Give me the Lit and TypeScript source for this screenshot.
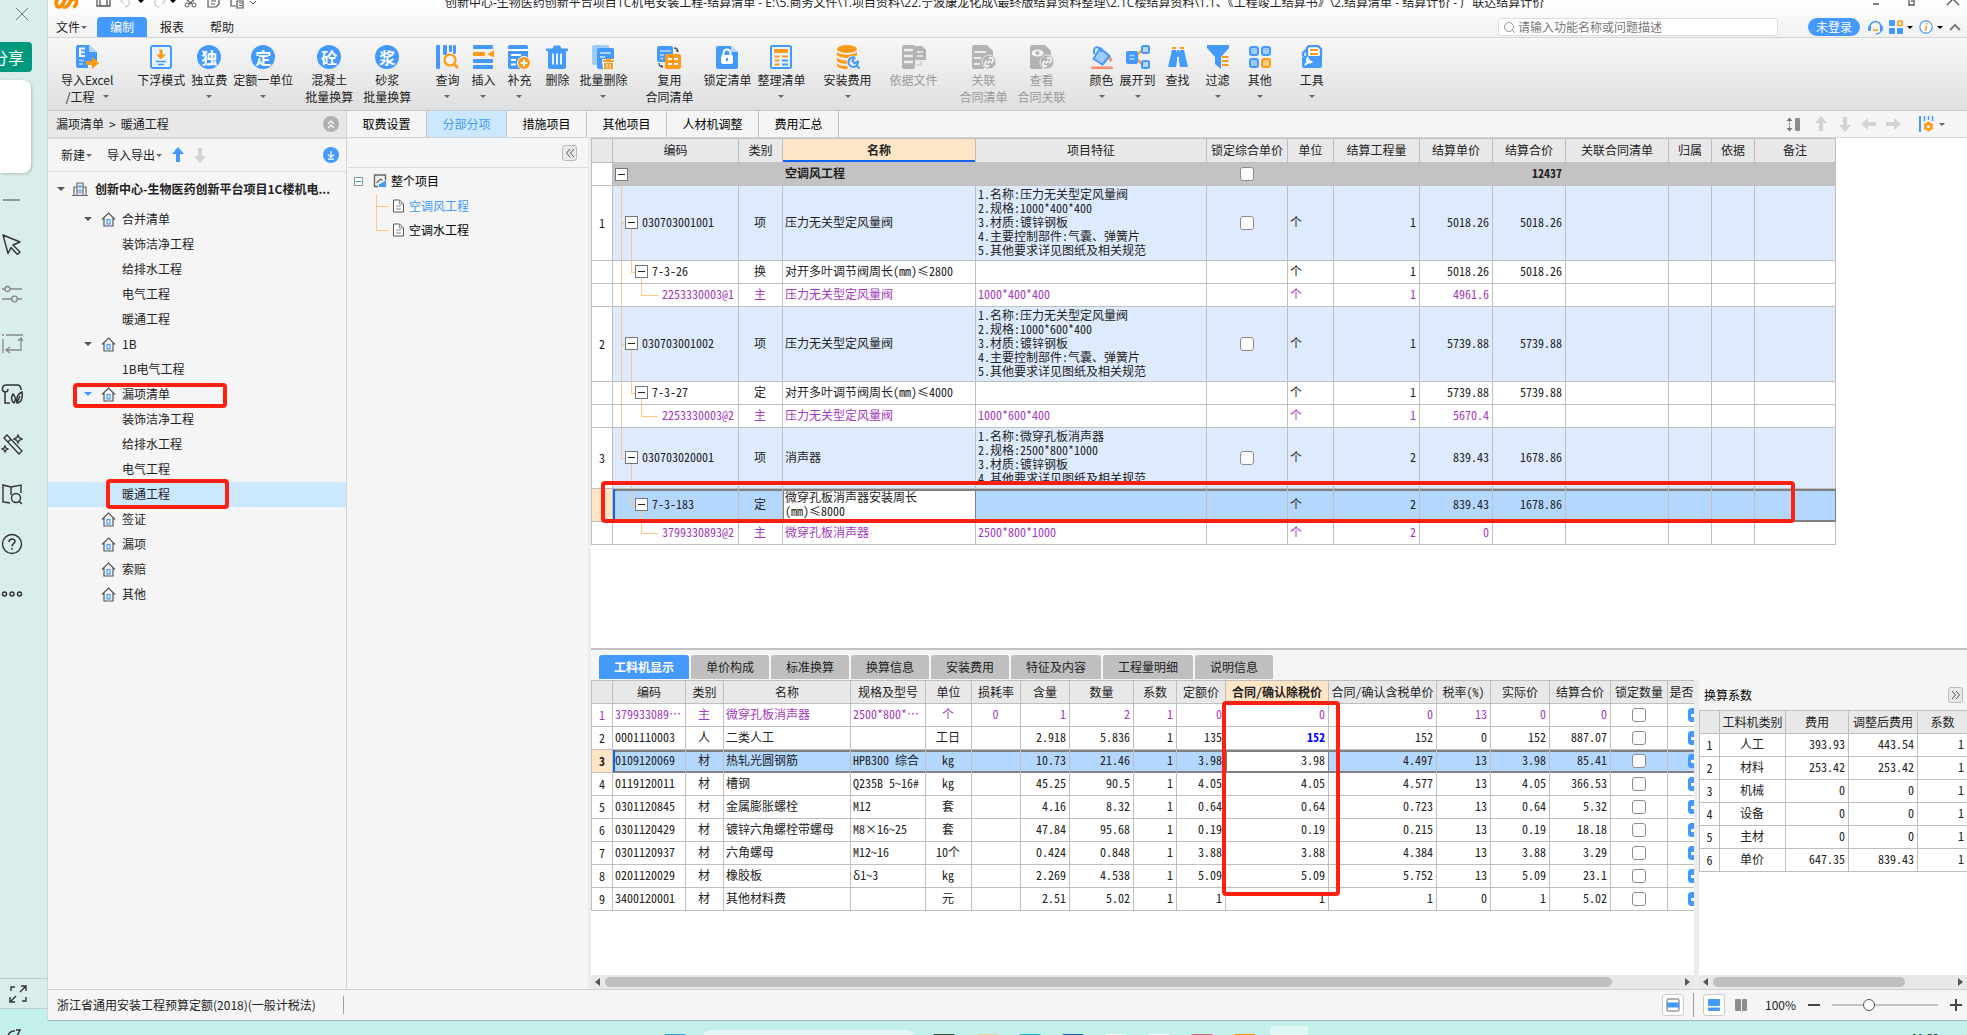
import { LitElement, html, svg, css, nothing, type TemplateResult } from "lit";
import { customElement } from "lit/decorators.js";
import { classMap } from "lit/directives/class-map.js";

const B = "#4499ff";
const O = "#ff9a17";
const G = "#b3b3b3";

const icon = (body: unknown, size = 24, cls = "ic", box = size) =>
  html`<svg class=${cls} width=${size} height=${size} viewBox="0 0 ${box} ${box}" fill="none" aria-hidden="true">${body}</svg>`;

const ICONS: Record<string, TemplateResult> = {
  excel: icon(svg`<path d="M3 0h11l8 7v10h-9v6H3a2 2 0 0 1-2-2V2a2 2 0 0 1 2-2z" fill=${B}/><path d="M14 0l8 7h-8z" fill="#b5d7ff"/>
    <path d="M10 3.500H5v7.500h5M5 7.200h4.500" stroke="#fff" stroke-width="2"/><path d="M4 15.500h5M4 19h4" stroke="#b5d7ff" stroke-width="1.500"/>
    <path d="M11 16h6v-4l7 6-7 6v-4h-6z" fill=${O}/>`),
  float: icon(svg`<rect x="2" y="1" width="20" height="22" rx="2" fill="#eaf4ff" stroke=${B} stroke-width="2"/>
    <path d="M10.500 4.500h3v5H17l-5 5-5-5h3.500z" fill=${O}/><path d="M7 16.500h10M9 19.500h6" stroke=${B} stroke-width="1.600"/>`),
  query: icon(svg`<rect x="1" y="0" width="4" height="24" rx="1" fill=${B}/><rect x="8" y="0" width="4" height="10" rx="1" fill=${B}/><rect x="14" y="0" width="3" height="7" rx="1" fill=${B}/><rect x="18" y="0" width="3" height="9" rx="1" fill=${B}/>
    <circle cx="15" cy="15" r="5.500" fill="#f7f2ea" stroke=${O} stroke-width="2.200"/><path d="M19 19l4 4" stroke=${O} stroke-width="2.600"/>`),
  insert: icon(svg`<rect x="2" y="0" width="20" height="4" rx="1" fill=${B}/><rect x="2" y="14" width="20" height="4" rx="1" fill=${B}/><rect x="2" y="20" width="20" height="4" rx="1" fill=${B}/>
    <rect x="2" y="7" width="12" height="4" rx="1" fill=${O}/><path d="M23 5.500v7L16 9z" fill=${O}/>`),
  supply: icon(svg`<path d="M3 0h16a2 2 0 0 1 2 2v20a2 2 0 0 1-2 2H3a2 2 0 0 1-2-2V2a2 2 0 0 1 2-2z" fill=${B}/><path d="M1 5h20M4 10h10M4 15h5M4 19.500h5" stroke="#fff" stroke-width="1.800"/>
    <circle cx="17" cy="18" r="6.500" fill=${O} stroke="#fff" stroke-width="1"/><path d="M17 14.500v7M13.500 18h7" stroke="#fff" stroke-width="2"/>`),
  trash: icon(svg`<path d="M1 3.500h6.500L9 .5h6l1.500 3H23v2.500H1z" fill=${B}/><path d="M3 6h18v16a2 2 0 0 1-2 2H5a2 2 0 0 1-2-2z" fill=${B}/><path d="M8 8.500v11M12 8.500v11M16 8.500v11" stroke="#fff" stroke-width="1.700"/>`),
  batch: icon(svg`<rect x="1" y="0" width="17" height="20" rx="2" fill="#9fcbff"/><rect x="6" y="3" width="17" height="21" rx="2" fill=${B}/><path d="M9 8h11M9 12h5" stroke="#d6e9ff" stroke-width="1.600"/>
    <path d="M11 14h12v10H12z" fill="#fff"/><path d="M12 15h3l1-1.500h3l1 1.500h3v2H12zM13 18h9v6h-9z" fill=${O}/><path d="M16 19v4M19 19v4" stroke="#fff" stroke-width="1"/>`),
  reuse: icon(svg`<rect x="0" y="1" width="16" height="16" rx="2" fill=${B}/><path d="M3 6h11M3 10h4M3 13.500h3" stroke="#b5d7ff" stroke-width="1.600"/>
    <rect x="8" y="9" width="16" height="15" rx="2" fill=${O}/><path d="M11 14h4M17 14h4M11 19h4M17 19h4" stroke="#fff" stroke-width="1.800"/>
    <path d="M17 3c3 0 4 1.500 4 4M21 7l-1.800-2M2 18c0 3 1.500 4 4 4M6 22l-2-1.800" stroke="#555" stroke-width="1.300"/>`),
  lock: icon(svg`<path d="M3 1h13l7 6v15a2 2 0 0 1-2 2H3a2 2 0 0 1-2-2V3a2 2 0 0 1 2-2z" fill=${B}/><path d="M16 0v7h7z" fill="#b5d7ff"/>
    <rect x="6" y="10" width="12" height="9" rx="2" fill="#fff"/><path d="M8.500 11V8a3.500 3.500 0 0 1 7 0v3" stroke="#fff" stroke-width="2"/><path d="M12 13v3" stroke=${B} stroke-width="2"/>`),
  tidy: icon(svg`<rect x="2" y="1" width="20" height="22" rx="1.500" fill="#eaf4ff" stroke=${B} stroke-width="2"/><rect x="5" y="4" width="14" height="4" rx="1" fill=${O}/>
    <path d="M5.500 11.500h5M5.500 15.500h5M5.500 19.500h5M13 11.500h6" stroke=${O} stroke-width="2"/><path d="M13 15.500h6M13 19.500h6" stroke=${B} stroke-width="2"/>`),
  fee: icon(svg`<ellipse cx="11" cy="4" rx="10" ry="4" fill=${O}/><path d="M1 7c3 3.500 17 3.500 20 0v3c-3 4-17 4-20 0z" fill=${O}/><path d="M1 12.500c3 3 8 3.300 12 2.500l-2 4c-4 0-8-.8-10-3z" fill=${O}/><path d="M1 18.500c2 2 6 2.500 10 2.500l1 2.800c-4 .4-9-.3-11-2.800z" fill=${O}/>
    <circle cx="17" cy="17" r="6.500" fill="#f0f0f0"/><path d="M18.500 12.500a4.800 4.800 0 1 0 3.500 3.800l-3.500 2-2-2zM19.500 20l4 3.500" stroke=${B} stroke-width="2" stroke-linejoin="round"/>`),
  basis: icon(svg`<rect x="0" y="0" width="13" height="24" rx="2" fill=${G}/><path d="M2 5h9M2 11h9M2 17h9" stroke="#ececec" stroke-width="2.400"/>
    <path d="M13 1h7l4 4v10H13z" fill=${G}/><path d="M15 7h6M15 11h6" stroke="#eee" stroke-width="1.500"/><path d="M19 16v4h-5" stroke="#cfcfcf" stroke-width="1.500"/>`),
  link: icon(svg`<path d="M2 0h13l6 6v6l-9 4v8H2a2 2 0 0 1-2-2V2a2 2 0 0 1 2-2z" fill=${G}/><path d="M2 7h12M2 13h7M2 19h6" stroke="#ececec" stroke-width="2.200"/>
    <circle cx="17" cy="17" r="7" fill=${G} stroke="#e8e8e8"/><path d="M15.500 18.500l3-3M17 13.500a2.300 2.300 0 0 1 3.500 3.200l-1.500 1.500M17 20.500a2.300 2.300 0 0 1-3.500-3.200l1.500-1.500" stroke="#fff" stroke-width="1.500"/>`),
  view: icon(svg`<path d="M2 0h13l6 6v6l-9 4v8H2a2 2 0 0 1-2-2V2a2 2 0 0 1 2-2z" fill=${G}/><ellipse cx="7.500" cy="8" rx="6" ry="3.600" fill="#f4f4f4"/><circle cx="7.500" cy="8" r="2" fill=${G}/>
    <circle cx="17" cy="17" r="7" fill=${G} stroke="#e8e8e8"/><path d="M15.500 18.500l3-3M17 13.500a2.300 2.300 0 0 1 3.500 3.200l-1.500 1.500M17 20.500a2.300 2.300 0 0 1-3.500-3.200l1.500-1.500" stroke="#fff" stroke-width="1.500"/>`),
  color: icon(svg`<path d="M10 3l9.500 8-7 8.500L3.500 14z" fill="#9fcbff" stroke=${B} stroke-width="2" stroke-linejoin="round"/><path d="M4.500 9C2 2 9-1 11.500 7" stroke=${B} stroke-width="2"/><path d="M20.500 11.500c2.600 4 .8 5 0 5s-2.600-1 0-5z" fill="#fc7a57"/>
    <rect x="1" y="21.500" width="22" height="2.500" rx="1" fill="#fc8a6c"/>`),
  expand: icon(svg`<path d="M11 10l5-5M11 14l5 5" stroke=${O} stroke-width="2"/><rect x="0" y="6" width="12" height="13" rx="2" fill=${B}/><path d="M3.500 10.500h5M3.500 14h5" stroke="#b5d7ff" stroke-width="1.500"/>
    <rect x="16" y="1" width="7" height="7" rx="1.500" fill="#b5d7ff" stroke=${B} stroke-width="2"/><rect x="16" y="16" width="7" height="7" rx="1.500" fill="#b5d7ff" stroke=${B} stroke-width="2"/>`),
  find: icon(svg`<path d="M6 5h4l1 3v8l-1 6H2z" fill=${B}/><path d="M18 5h-4l-1 3v8l1 6h8z" fill=${B}/><path d="M12 5v7" stroke=${B} stroke-width="2"/><path d="M6 3h4M14 3h4" stroke=${O} stroke-width="2"/>`),
  filter: icon(svg`<path d="M1 0h22v3l-8 9v12l-6-5v-7L1 3z" fill=${B}/><path d="M16 12h6.500M16 16h6.500M16 20h6.500" stroke=${O} stroke-width="2"/>`),
  other: icon(svg`<rect x="2" y="2" width="8" height="8" rx="2" fill="#9fcbff" stroke=${B} stroke-width="2"/><rect x="14" y="2" width="8" height="8" rx="2" fill="#9fcbff" stroke=${B} stroke-width="2"/>
    <rect x="2" y="14" width="8" height="8" rx="2" fill="#9fcbff" stroke=${B} stroke-width="2"/><rect x="14" y="14" width="8" height="8" rx="2" fill="#ffc982" stroke=${O} stroke-width="2"/>`),
  tool: icon(svg`<path d="M3 11V8l4-4M7 12V3l2-2h9l3 3v9" stroke=${B} stroke-width="2.400" fill="#fff"/><path d="M10 5h8M10 9h8" stroke=${O} stroke-width="2"/><rect x="2" y="11" width="20" height="12" rx="2" fill=${B}/>
    <path d="M5 20l5-5M8.500 12.500a2.600 2.600 0 1 0 3.500 3.500" stroke="#fff" stroke-width="2.200"/>`),
};

const home = icon(svg`<path d="M1 7.500L7.500 1 14 7.500M3 6v8h9V6" stroke="#555" stroke-width="1.200"/><rect x="6" y="7.500" width="3" height="4.500" stroke=${B} stroke-width="1.200"/>`, 15, "");
const building = icon(svg`<path d="M5 14V2h6v12M5 6H2v8M11 6h3v8M0 14.500h16" stroke="#666" stroke-width="1.200"/><path d="M7 4.500h2v2H7zM7 9h2v3H7z" stroke=${B}/>`, 16, "");
const page = icon(svg`<path d="M.5 1h6l4 4v8H.5z" fill="#fff" stroke="#555"/><path d="M6.500 1v4h4M3 7h5M3 10h5" stroke="#888"/>`, 14, "");
const project = icon(svg`<path d="M5 12.500H1.500V1h11v5" stroke="#666" stroke-width="1.400"/><path d="M3.500 9l4-4 2 1.500" stroke="#666" stroke-width="1.200"/><path d="M6 13V10l3-1 4-3v7z" fill=${B}/>`, 14, "");
const arrowUp = (c: string, turn = 0) => html`<svg class="arrow" width="16" height="16" viewBox="0 0 16 16" aria-hidden="true"><path transform="rotate(${turn} 8 8)" d="M8 0l6 7h-4v8H6V7H2z" fill=${c}/></svg>`;

type Tool = { n: string; l2?: string; ic?: string; ch?: string; drop?: boolean; off?: boolean; g: number };
const TOOLS: Tool[] = [
  { n: "导入Excel", l2: "/工程", ic: "excel", drop: true, g: 24 },
  { n: "下浮模式", ic: "float", g: 6 },
  { n: "独立费", ch: "独", drop: true, g: 6 },
  { n: "定额一单位", ch: "定", drop: true, g: 12 },
  { n: "混凝土", l2: "批量换算", ch: "砼", g: 10 },
  { n: "砂浆", l2: "批量换算", ch: "浆", g: 24 },
  { n: "查询", ic: "query", drop: true, g: 12 },
  { n: "插入", ic: "insert", drop: true, g: 12 },
  { n: "补充", ic: "supply", drop: true, g: 14 },
  { n: "删除", ic: "trash", g: 10 },
  { n: "批量删除", ic: "batch", drop: true, g: 18 },
  { n: "复用", l2: "合同清单", ic: "reuse", g: 10 },
  { n: "锁定清单", ic: "lock", g: 6 },
  { n: "整理清单", ic: "tidy", drop: true, g: 18 },
  { n: "安装费用", ic: "fee", drop: true, g: 18 },
  { n: "依据文件", ic: "basis", off: true, g: 22 },
  { n: "关联", l2: "合同清单", ic: "link", off: true, g: 10 },
  { n: "查看", l2: "合同关联", ic: "view", off: true, g: 24 },
  { n: "颜色", ic: "color", drop: true, g: 6 },
  { n: "展开到", ic: "expand", drop: true, g: 10 },
  { n: "查找", ic: "find", g: 16 },
  { n: "过滤", ic: "filter", drop: true, g: 18 },
  { n: "其他", ic: "other", drop: true, g: 28 },
  { n: "工具", ic: "tool", drop: true, g: 0 },
];

type Node = { t: string; kind: "group" | "leaf"; on?: boolean; box?: string; open?: boolean };
const TREE: Node[] = [
  { t: "合并清单", kind: "group", open: true },
  { t: "装饰洁净工程", kind: "leaf" },
  { t: "给排水工程", kind: "leaf" },
  { t: "电气工程", kind: "leaf" },
  { t: "暖通工程", kind: "leaf" },
  { t: "1B", kind: "group", open: true },
  { t: "1B电气工程", kind: "leaf" },
  { t: "漏项清单", kind: "group", open: true, box: "mark-a" },
  { t: "装饰洁净工程", kind: "leaf" },
  { t: "给排水工程", kind: "leaf" },
  { t: "电气工程", kind: "leaf" },
  { t: "暖通工程", kind: "leaf", on: true, box: "mark-b" },
  { t: "签证", kind: "group" },
  { t: "漏项", kind: "group" },
  { t: "索赔", kind: "group" },
  { t: "其他", kind: "group" },
];

const COLS1 = [21, 126, 44, 193, 231, 81, 46, 86, 73, 73, 103, 43, 43, 81];
const HEAD1 = ["", "编码", "类别", "名称", "项目特征", "锁定综合单价", "单位", "结算工程量", "结算单价", "结算合价", "关联合同清单", "归属", "依据", "备注"];
type Row1 = { no?: string; code: string; type: string; name: string; feat?: string[]; qty: string; price: string; total: string; kind: "bill" | "quota" | "main"; last?: boolean; sel?: boolean };
const feat = (size: string) => ["1.名称:压力无关型定风量阀", `2.规格:${size}`, "3.材质:镀锌钢板", "4.主要控制部件:气囊、弹簧片", "5.其他要求详见图纸及相关规范"];
const ROWS1: Row1[] = [
  { no: "1", code: "030703001001", type: "项", name: "压力无关型定风量阀", feat: feat("1000*400*400"), qty: "1", price: "5018.26", total: "5018.26", kind: "bill" },
  { code: "7-3-26", type: "换", name: "对开多叶调节阀周长(mm)≤2800", qty: "1", price: "5018.26", total: "5018.26", kind: "quota" },
  { code: "2253330003@1", type: "主", name: "压力无关型定风量阀", feat: ["1000*400*400"], qty: "1", price: "4961.6", total: "", kind: "main" },
  { no: "2", code: "030703001002", type: "项", name: "压力无关型定风量阀", feat: feat("1000*600*400"), qty: "1", price: "5739.88", total: "5739.88", kind: "bill" },
  { code: "7-3-27", type: "定", name: "对开多叶调节阀周长(mm)≤4000", qty: "1", price: "5739.88", total: "5739.88", kind: "quota" },
  { code: "2253330003@2", type: "主", name: "压力无关型定风量阀", feat: ["1000*600*400"], qty: "1", price: "5670.4", total: "", kind: "main" },
  { no: "3", code: "030703020001", type: "项", name: "消声器", feat: ["1.名称:微穿孔板消声器", "2.规格:2500*800*1000", "3.材质:镀锌钢板", "4.其他要求详见图纸及相关规范"], qty: "2", price: "839.43", total: "1678.86", kind: "bill", last: true },
  { code: "7-3-183", type: "定", name: "微穿孔板消声器安装周长(mm)≤8000", qty: "2", price: "839.43", total: "1678.86", kind: "quota", last: true, sel: true },
  { code: "3799330893@2", type: "主", name: "微穿孔板消声器", feat: ["2500*800*1000"], qty: "2", price: "0", total: "", kind: "main", last: true },
];

const COLS2 = [21, 73, 38, 127, 75, 46, 49, 49, 64, 43, 49, 103, 108, 54, 59, 61, 57, 27];
const HEAD2 = ["", "编码", "类别", "名称", "规格及型号", "单位", "损耗率", "含量", "数量", "系数", "定额价", "合同/确认除税价", "合同/确认含税单价", "税率(%)", "实际价", "结算合价", "锁定数量", "是否"];
const ROWS2 = [
  ["379933089⋯", "主", "微穿孔板消声器", "2500*800*⋯", "个", "0", "1", "2", "1", "0", "0", "0", "13", "0", "0"],
  ["0001110003", "人", "二类人工", "", "工日", "", "2.918", "5.836", "1", "135", "152", "152", "0", "152", "887.07"],
  ["0109120069", "材", "热轧光圆钢筋", "HPB300 综合", "kg", "", "10.73", "21.46", "1", "3.98", "3.98", "4.497", "13", "3.98", "85.41"],
  ["0119120011", "材", "槽钢", "Q235B 5~16#", "kg", "", "45.25", "90.5", "1", "4.05", "4.05", "4.577", "13", "4.05", "366.53"],
  ["0301120845", "材", "金属膨胀螺栓", "M12", "套", "", "4.16", "8.32", "1", "0.64", "0.64", "0.723", "13", "0.64", "5.32"],
  ["0301120429", "材", "镀锌六角螺栓带螺母", "M8×16~25", "套", "", "47.84", "95.68", "1", "0.19", "0.19", "0.215", "13", "0.19", "18.18"],
  ["0301120937", "材", "六角螺母", "M12~16", "10个", "", "0.424", "0.848", "1", "3.88", "3.88", "4.384", "13", "3.88", "3.29"],
  ["0201120029", "材", "橡胶板", "δ1~3", "kg", "", "2.269", "4.538", "1", "5.09", "5.09", "5.752", "13", "5.09", "23.1"],
  ["3400120001", "材", "其他材料费", "", "元", "", "2.51", "5.02", "1", "1", "1", "1", "0", "1", "5.02"],
];
const ALIGN2 = ["l", "c", "l", "l", "c", "c", "r", "r", "r", "r", "r", "r", "r", "r", "r"];

const COLS3 = [20, 66, 63, 69, 50];
const ROWS3 = [
  ["人工", "393.93", "443.54", "1"],
  ["材料", "253.42", "253.42", "1"],
  ["机械", "0", "0", "1"],
  ["设备", "0", "0", "1"],
  ["主材", "0", "0", "1"],
  ["单价", "647.35", "839.43", "1"],
];

const cols = (w: number[]) => html`<colgroup>${w.map((x) => html`<col style="width:${x}px">`)}</colgroup>`;

@customElement("app-root")
export class AppRoot extends LitElement {
  static styles = css`
    :host { display: block; height: 100vh; overflow: hidden; color: #222; --line: #bfbfbf; --blue: #4499ff;
      font: 12px/16px "Noto Sans CJK SC", "Open Sans", sans-serif; }
    * { box-sizing: border-box; }
    button { font: inherit; color: inherit; background: none; border: 0; padding: 0; margin: 0; display: inline-flex; align-items: center; justify-content: center; white-space: nowrap; }
    svg { display: block; flex: none; }
    .desk { display: flex; height: 100%; background: #c3f0ea; }
    .caret { width: 0; height: 0; border: 4px solid transparent; border-top-color: #555; border-bottom: 0; flex: none; }
    .caret.sm { border-width: 3px; border-top-color: #666; border-bottom: 0; }
    .caret.black { border-top-color: #000; }
    .caret.blue { border-top-color: var(--blue); }

    .dock { width: 47px; flex: none; display: flex; flex-direction: column; }
    .dock-body { flex: 1; min-height: 0; background: #d9edea; display: flex; flex-direction: column; align-items: flex-start; }
    .dock-close { width: 44px; height: 28px; margin-bottom: 14px; }
    .share { width: 32px; height: 30px; background: #00997f; color: #fff; border-radius: 0 4px 4px 0; font-size: 16px; overflow: hidden; justify-content: flex-end; padding-right: 8px; }
    .card { width: 31px; height: 93px; background: #fff; border-radius: 0 8px 8px 0; margin: 8px 0; box-shadow: 1px 1px 3px #0003; }
    .dock-ic { width: 24px; height: 50px; }
    .dock-ic.dash { height: 38px; }
    .dock-foot { height: 31px; width: 47px; margin-top: auto; border: 1px solid #b9cfcc; border-width: 1px 0; padding-right: 12px; }
    .dock-corner { height: 26px; padding: 20px 0 0 6px; overflow: hidden; }

    .frame { flex: 1; min-width: 0; display: flex; flex-direction: column; }
    .app { flex: 1; min-height: 0; display: flex; flex-direction: column; background: #f5f5f5; border-left: 1px solid #d4d4d4; border-bottom: 1px solid #9fbfbb; }
    .top { height: 38px; flex: none; border-bottom: 1px solid #d4d4d4; background: linear-gradient(#fff, #f1f1f1); display: flex; flex-direction: column; }
    .title { height: 17px; display: flex; align-items: flex-start; overflow: hidden; }
    .quick { display: flex; width: 397px; padding-left: 6px; flex: none; }
    .doc-title { margin-top: -7px; height: 20px; line-height: 20px; white-space: nowrap; flex: 1; font-family: "Open Sans", "Noto Sans CJK SC", sans-serif; }
    .win { display: flex; }
    .menu { height: 20px; display: flex; align-items: center; padding-left: 8px; line-height: 20px; }
    .menu-btn { height: 20px; width: 50px; }
    .menu-btn.file { width: 31px; margin-right: 10px; gap: 1px; }
    .menu-btn.on { background: var(--blue); color: #fff; border-radius: 4px 4px 0 0; }
    .menu-right { margin-left: auto; display: flex; align-items: center; height: 20px; padding-right: 6px; }
    .search { width: 280px; height: 18px; border: 1px solid #dcdcdc; border-radius: 3px; background: #fff; display: flex; align-items: center; gap: 2px; padding: 0 4px; margin-right: 30px; }
    .search input { flex: 1; min-width: 0; border: 0; outline: 0; padding: 0; background: none; font: inherit; height: 16px; }
    .search input::placeholder { color: #777; }
    .login { width: 52px; height: 18px; border-radius: 9px; background: var(--blue); color: #fff; margin-right: 8px; }
    .mini { height: 18px; gap: 4px; margin-right: 6px; }

    .tools { height: 73px; flex: none; border-bottom: 1px solid #c9c9c9; background: linear-gradient(#f7f7f7, #dfdfdf); display: flex; align-items: flex-start; padding: 7px 0 0 13px; overflow: hidden; }
    .tool { flex-direction: column; justify-content: flex-start; min-width: 24px; margin-right: var(--gap); }
    .tool.off { color: #999; }
    .tool .ic, .disc { margin-bottom: 2px; }
    .disc { width: 24px; height: 24px; border-radius: 50%; background: var(--blue); color: #fff; font-weight: 700; font-size: 16px; line-height: 24px; display: block; }
    .l1 { height: 17px; line-height: 17px; }
    .l2 { height: 17px; line-height: 17px; display: flex; align-items: center; gap: 8px; }

    .body { flex: 1; min-height: 0; display: flex; }
    .nav { width: 299px; flex: none; border-right: 1px solid #d4d4d4; display: flex; flex-direction: column; }
    .crumb { height: 28px; background: #e8e8e8; border-bottom: 2px solid #dadada; display: flex; align-items: center; gap: 5px; padding: 0 7px 0 8px; }
    .crumb .round { margin-left: auto; }
    .round { width: 16px; height: 16px; border-radius: 50%; background: #b0b0b0; }
    .round.blue { background: var(--blue); }
    .nav-bar { height: 33px; border-bottom: 1px solid #dadada; display: flex; align-items: center; padding: 0 7px 0 13px; }
    .nav-bar button { gap: 1px; margin-right: 15px; }
    .nav-bar button.out { margin-right: 8px; }
    .nav-bar button.ar { margin-right: 6px; }
    .nav-bar button.round { margin: 0 0 0 auto; }
    .tree { list-style: none; margin: 0; padding: 0; }
    .row { height: 25px; display: flex; align-items: center; padding: 0 0 1px 36px; position: relative; }
    .row.root { height: 35px; padding-left: 9px; font-weight: 700; gap: 7px; }
    .row.on { background: #cce8ff; }
    .row .slot { width: 8px; margin-right: 9px; }
    .row svg { margin-right: 6px; }
    .row.root svg { margin: 0; }
    .row.leaf { padding-left: 74px; }
    .mark { position: absolute; border: 4px solid #ff2010; border-radius: 4px; pointer-events: none; }
    .mark-a { left: 25px; top: 1px; width: 154px; height: 25px; }
    .mark-b { left: 58px; top: -3px; width: 123px; height: 30px; z-index: 1; }

    .main { flex: 1; min-width: 0; display: flex; flex-direction: column; }
    .tabs { height: 27px; flex: none; border-bottom: 1px solid #d4d4d4; display: flex; }
    .tab { width: 80px; border-right: 1px solid #c4c4c4; color: #000; }
    .tab.wide { width: 92px; }
    .tab.on { background: #cce8ff; color: var(--blue); }
    .tab-tools { margin-left: auto; display: flex; align-items: center; gap: 8px; padding-right: 16px; }
    .tab-tools .rows { margin-right: 4px; }
    .tab-tools .mini { margin-left: 10px; }
    .content { flex: 1; min-height: 0; display: flex; }
    .struct { width: 244px; flex: none; border-right: 3px solid #ececec; padding-left: 2px; }
    .struct-bar { height: 30px; border-bottom: 1px solid #dadada; display: flex; justify-content: flex-end; align-items: center; padding-right: 11px; }
    .fold { width: 15px; height: 16px; border: 1px solid #bbb; border-radius: 3px; background: #e9e9e9; color: #555; }
    .s-row { height: 24px; display: flex; align-items: center; color: #000; }
    .s-root { padding-left: 5px; height: 26px; }
    .s-root svg { margin: 0 4px 0 10px; }
    .box { width: 9px; height: 9px; border: 1px solid #8a9aa5; background: #fff; }
    .box::before { content: ""; width: 5px; height: 1px; background: #1a9fd0; }
    .s-kids { margin: 0; padding: 0 0 0 27px; list-style: none; }
    .s-kids li { padding-left: 17px; gap: 2px;
      background: linear-gradient(#fbc97f, #fbc97f) 0 0 / 1px 100% no-repeat, linear-gradient(#fbc97f, #fbc97f) 0 50% / 13px 1px no-repeat; }
    .s-kids li:last-child { background-size: 1px 50%, 13px 1px; }
    .s-kids li.on { color: var(--blue); }

    .work { flex: 1; min-width: 0; display: flex; flex-direction: column; }
    .upper { flex: 1; min-height: 0; background: #fff; overflow: hidden; position: relative; }
    .mark-c { left: 10px; top: 343px; width: 1194px; height: 42px; }
    .mark-d { left: 631px; top: 21px; width: 118px; height: 195px; }
    table { border-spacing: 0; table-layout: fixed; width: 0; border-left: 1px solid var(--line); border-top: 1px solid var(--line);
      font: 12px/14px "Noto Sans Mono CJK SC", "Noto Sans CJK SC", monospace; background: #fff; }
    th, td { border-right: 1px solid var(--line); border-bottom: 1px solid var(--line); padding: 0 3px 2px 2px; overflow: hidden; white-space: nowrap; font-weight: 400; height: 23px; text-align: center; }
    thead th { background: #e8e8e8; padding: 0 0 1px; }
    thead th.cur { background: #fee5c6; font-weight: 700; }
    .upper thead th { height: 24px; }
    .upper thead th.cur { box-shadow: inset 0 -2px #1264f0; }
    .l { text-align: left; }
    .r { text-align: right; }
    tbody th { background: #fff; padding: 0; }
    .sum td { background: #c3c3c3; font-weight: 700; }
    .bill td { background-color: #deebff; height: 75px; }
    .bill.last td { height: 61px; }
    .purple { color: #a339bd; }
    td.name { white-space: normal; }
    td.tick { padding-bottom: 0; }
    .sel td { background-color: #b4d7ff; box-shadow: inset 0 2px #808080, inset 0 -1px #808080; border-bottom-color: #808080; }
    .upper .sel td { height: 33px; }
    .upper .sel td:last-child { border-right-color: #808080; }
    .sel td.edit { background: #fff; box-shadow: inset 0 2px #808080, inset 0 -1px #808080, inset 1px 0 #808080; border-right-color: #808080; }
    .sel td:nth-child(2) { box-shadow: inset 2px 0 #1264f0, inset 0 2px #808080, inset 0 -1px #808080; }
    .sel th { background: #fee5c6; font-weight: 700; }
    .in { display: flex; align-items: center; gap: 4px; }
    .pm { width: 13px; height: 13px; border: 1px solid #777; background: #fff; flex: none; }
    .pm::before { content: ""; width: 7px; height: 1px; background: #222; }
    .k0 { line-height: 0; }
    .sum .k0 { padding-bottom: 0; background: linear-gradient(#fbc97f, #fbc97f) 8px 100% / 1px 5px no-repeat #c3c3c3; }
    .bill .k1 { padding-left: 12px; background-image: linear-gradient(#fbc97f, #fbc97f), linear-gradient(#fbc97f, #fbc97f), linear-gradient(#fbc97f, #fbc97f);
      background-position: 8px 0, 8px 50%, 18px 100%; background-size: 1px 100%, 5px 1px, 1px 50%; background-repeat: no-repeat; }
    .bill.last .k1 { background-size: 1px 50%, 5px 1px, 1px 50%; }
    .quota .k2 { padding-left: 22px; background-image: linear-gradient(#fbc97f, #fbc97f), linear-gradient(#fbc97f, #fbc97f), linear-gradient(#fbc97f, #fbc97f), linear-gradient(#fbc97f, #fbc97f);
      background-position: 18px 0, 18px 50%, 28px 100%, 8px 0; background-size: 1px 50%, 5px 1px, 1px 50%, 1px 100%; background-repeat: no-repeat; }
    .quota.last .k2 { background-size: 1px 50%, 5px 1px, 1px 50%, 0 0; }
    .main-mat .k3 { padding-left: 49px; padding-right: 0; background-image: linear-gradient(#fbc97f, #fbc97f), linear-gradient(#fbc97f, #fbc97f), linear-gradient(#fbc97f, #fbc97f);
      background-position: 28px 0, 28px 50%, 8px 0; background-size: 1px 50%, 17px 1px, 1px 100%; background-repeat: no-repeat; }
    .main-mat.last .k3 { background-size: 1px 50%, 17px 1px, 0 0; }
    .chk { appearance: none; width: 14px; height: 14px; border: 1px solid #8c8c8c; border-radius: 3px; background: #fff; margin: 0; display: block; }
    .chk.mid { margin: 0 auto; }
    .chk:checked { border-color: var(--blue); background: var(--blue) linear-gradient(#fff, #fff) 2px 50% / 3px 3px no-repeat; }
    td.est, th.est { border-right: 0; padding-right: 0; }
    td.est { padding-left: 20px; }
    .blue-b { color: #0000ff; font-weight: 700; }

    .lower { height: 341px; flex: none; border-top: 2px solid #c2c2c2; display: flex; flex-direction: column; }
    .subtabs { display: flex; gap: 2px; padding: 5px 0 1px 8px; }
    .subtab { height: 24px; width: 78px; background: #bfbfbf; border-radius: 3px 3px 0 0; }
    .subtab.wide { width: 90px; }
    .subtab.on { background: var(--blue); color: #fff; font-weight: 700; }
    .panes { flex: 1; min-height: 0; display: flex; }
    .pane { flex: 1; min-width: 0; background: #fff; display: flex; flex-direction: column; position: relative; overflow: hidden; }
    .pane.side { flex: none; width: 268px; }
    .grid-clip { flex: 1; min-height: 0; overflow: hidden; }
    .gap { width: 5px; background: #ececec; }
    .side-head { height: 30px; background: #f5f5f5; display: flex; align-items: center; justify-content: space-between; padding: 0 4px 0 5px; font: 12px/16px "Noto Sans Mono CJK SC", "Noto Sans CJK SC", sans-serif; color: #000; }
    .bar { height: 14px; background: #e8e8e8; display: flex; align-items: center; padding: 0 4px; gap: 5px; }
    .bar i { width: 0; height: 0; border: 5px solid transparent; border-width: 4px 5px 4px 0; border-right-color: #555; }
    .bar i.next { border-width: 4px 0 4px 5px; border-left-color: #555; margin-left: auto; }
    .thumb { height: 10px; border-radius: 5px; background: #bfbfbf; }
    .t-long { width: 92%; }
    .t-short { width: 74%; }

    .status { height: 31px; flex: none; border-top: 1px solid #d0d0d0; display: flex; align-items: center; padding: 0 5px 0 9px; }
    .sep { width: 1px; height: 18px; background: #9a9fb0; margin-left: auto; }
    .status-left { width: 287px; display: flex; align-items: center; }
    .status-right { margin-left: auto; display: flex; align-items: center; gap: 9px; }
    .status-right .sep { height: 24px; margin: 0; }
    .sq { width: 22px; height: 22px; border: 1px solid #ccc; border-radius: 3px; background: #fff; }
    .pct { margin-left: 8px; width: 34px; }
    .zoom { appearance: none; width: 106px; height: 14px; background: linear-gradient(#c4c4c4, #c4c4c4) 0 50% / 100% 2px no-repeat; margin: 0 3px; }
    .zoom::-webkit-slider-thumb { appearance: none; width: 12px; height: 12px; border-radius: 50%; border: 1px solid #555; background: #fff; }

    .taskbar { height: 14px; flex: none; display: flex; align-items: flex-start; padding: 13px 28px 0 617px; overflow: hidden; }
    .chip { width: 22px; height: 6px; margin-right: 21px; flex: none; border-radius: 2px; background: var(--c); }
    .pill { width: 214px; height: 20px; margin: -4px 17px 0 -5px; flex: none; border-radius: 10px; background: #e3f8f5; }
    .live { width: 38px; height: 20px; margin: -8px 0 0 -7px; flex: none; border-radius: 4px; background: #e0f7f3; }
    .clock { margin: -2px 0 0 auto; font-size: 11px; line-height: 11px; }
  `;

  private dock() {
    const s = "#333";
    const btn = (name: string, body: unknown, cls = "") => html`<button class="dock-ic ${cls}" aria-label=${name}>${icon(body, 22, "")}</button>`;
    return html`<aside class="dock">
      <div class="dock-body">
        <button class="dock-close" aria-label="关闭">${icon(svg`<path d="M1 1l12 12M13 1L1 13" stroke="#777"/>`, 14, "")}</button>
        <button class="share">分享</button>
        <div class="card"></div>
        ${btn("最小化", svg`<path d="M2 11h17" stroke="#777" stroke-width="1.500"/>`, "dash")}
        ${btn("选择", svg`<path d="M2 2l17 7-7 3 7 7-2.500 2.500-6.500-7-3 6z" stroke=${s} stroke-width="1.400" stroke-linejoin="round"/>`)}
        ${btn("调节", svg`<path d="M1 6h3M9 6h12M1 16h10M16 16h5" stroke="#888" stroke-width="1.300"/><circle cx="6.500" cy="6" r="2.500" stroke="#888" stroke-width="1.300"/><circle cx="13.500" cy="16" r="2.800" stroke="#888" stroke-width="1.300"/>`)}
        ${btn("尺寸", svg`<path d="M2 6v14M1 2h2M5 2h17M17 8l3-3 2 3M20 5v12H6M9 14l-4 3 4 3" stroke="#888" stroke-width="1.300"/>`)}
        ${btn("图文", svg`<path d="M4 9c-4-1-3-7 1-7h11c3 0 4 2 4 5M4 9v11h5M4 9c2 0 3-1 3-3M12 11c3 3 3 6 1 9-3-2-3-6-1-9zM21 9c-4 2-6 6-5 11 4 0 6-5 5-11zM16 20l3-7" stroke=${s} stroke-width="1.500"/>`)}
        ${btn("魔法棒", svg`<path d="M3 5l3-3 15 16-3 3zM7 9l3-3M17 2l1.300 2.700L21 6l-2.700 1.300L17 10l-1.300-2.700L13 6l2.700-1.300zM4 13l1 2 2 1-2 1-1 2-1-2-2-1 2-1z" stroke=${s} stroke-width="1.300"/>`)}
        ${btn("查阅", svg`<path d="M9 20l-7-1V2l8 2 10-2v8M10 4v8" stroke=${s} stroke-width="1.400"/><circle cx="15" cy="15" r="4.500" stroke=${s} stroke-width="1.400"/><path d="M18 18l3 3" stroke=${s} stroke-width="1.500"/>`)}
        ${btn("帮助", svg`<circle cx="11" cy="11" r="9.500" stroke=${s} stroke-width="1.400"/><path d="M8 9c0-4 6-4 6-.5 0 2-3 2-3 5M11 15v1.800" stroke=${s} stroke-width="1.500"/>`)}
        ${btn("更多", svg`<circle cx="3.500" cy="11" r="2" stroke=${s} stroke-width="1.500"/><circle cx="11" cy="11" r="2" stroke=${s} stroke-width="1.500"/><circle cx="18.500" cy="11" r="2" stroke=${s} stroke-width="1.500"/>`)}
        <button class="dock-foot" aria-label="全屏">${icon(svg`<path d="M2 6V2h4M12 1h5v5M17 1l-6 6M1 12v5h5M1 17l6-6M17 12v4h-4" stroke=${s} stroke-width="1.400"/>`, 18, "")}</button>
      </div>
      <div class="dock-corner">${icon(svg`<path d="M2 8a6 6 0 0 1 7-6M10 1h4l-3 6" stroke=${s} stroke-width="1.500"/>`, 16, "")}</div>
    </aside>`;
  }

  private top() {
    const k = "#555";
    return html`<header class="top">
      <div class="title">
        <div class="quick">
          <svg width="170" height="12" viewBox="0 0 170 12" fill="none" aria-hidden="true">
            <path d="M4-1C1 2 2 7 5 7c4 0 4-6 8-9M9 7h2c5 0 4-8 9-8 4 0 3 7-1 8" stroke="#ff8c00" stroke-width="3.600"/>
            <path d="M43 0v6h13V0M46 6V0M53 6V0" stroke=${k} stroke-width="1.300"/>
            <path d="M68 0l-1 1 3 3M74 0c3 3 1 6-3 7M110 0l1 1-3 3M102 0c-3 3-1 6 3 7" stroke="#ccc" stroke-width="1.300"/>
            <path d="M84 0h6l-3 3zM116 0h6l-3 3z" fill="#000"/>
            <path d="M140 0l-5 4M133 0l5 4" stroke=${k} stroke-width="1.300"/><circle cx="133" cy="5" r="2" stroke=${k}/><circle cx="140" cy="5" r="2" stroke=${k}/>
            <path d="M154 0v7h8l3-3V0M157 1h5M157 4h4" stroke=${k} stroke-width="1.200"/>
          </svg>
          <svg width="40" height="12" viewBox="0 0 40 12" fill="none" aria-hidden="true">
            <path d="M7 0v6h5M13 1h6v7h-6zM15 3h3M15 5.500h3" stroke=${k} stroke-width="1.200"/><path d="M26 1l3 3 3-3" stroke=${k}/>
          </svg>
        </div>
        <div class="doc-title">创新中心-生物医药创新平台项目1C机电安装工程-结算清单 - E:\\5.商务文件\\1.项目资料\\22.宁波康龙化成\\最终版结算资料整理\\2.1C楼结算资料\\1.1、《工程竣工结算书》\\2.结算清单 - 结算计价 - 广联达结算计价</div>
        <div class="win">
          <svg width="100" height="8" viewBox="0 0 100 8" fill="none" aria-hidden="true"><path d="M6 4h6M42 0v5h5V0M45 0v2M80 5l6-6 6 6" stroke="#555" stroke-width="1.300"/></svg>
        </div>
      </div>
      <nav class="menu">
        <button class="menu-btn file">文件<span class="caret sm"></span></button>
        <button class="menu-btn on">编制</button><button class="menu-btn">报表</button><button class="menu-btn">帮助</button>
        <div class="menu-right">
          <label class="search">${icon(svg`<circle cx="6" cy="6" r="4.500" stroke="#999"/><path d="M9 9l3 3" stroke="#999"/>`, 13, "")}
            <input type="search" aria-label="搜索功能" placeholder="请输入功能名称或问题描述"></label>
          <button class="login">未登录</button>
          <button class="mini" aria-label="客服">${icon(svg`<path d="M2 9V7a5.500 5.500 0 0 1 11 0v3c0 2-2 4-5 4" stroke=${B} stroke-width="1.600"/><rect x="0" y="6" width="3" height="5" rx="1" fill=${B}/><rect x="12" y="6" width="3" height="5" rx="1" fill=${B}/><path d="M5 9c1 2 4 2 5 0" stroke=${O} stroke-width="1.500"/>`, 15, "")}</button>
          <button class="mini" aria-label="应用">${icon(svg`<rect x="0" y="0" width="6" height="6" rx="1" fill=${B}/><rect x="8.700" y="1" width="4.500" height="4.500" rx="1" stroke=${O} stroke-width="1.600"/><rect x="0" y="8" width="6" height="6" rx="1" fill=${B}/><rect x="8" y="8" width="6" height="6" rx="1" fill=${B}/>`, 14, "")}<span class="caret sm black"></span></button>
          <button class="mini" aria-label="信息">${icon(svg`<circle cx="7" cy="7" r="6.200" fill="#fff" stroke=${B} stroke-width="1.200"/><path d="M8 3l-.3 1.500M7.500 6L6.500 11" stroke=${O} stroke-width="1.600"/>`, 14, "")}<span class="caret sm black"></span></button>
          <button aria-label="收起">${icon(svg`<path d="M1 9l5-5 5 5" stroke="#777" stroke-width="1.800"/>`, 12, "")}</button>
        </div>
      </nav>
    </header>`;
  }

  private tools() {
    return html`<div class="tools">${TOOLS.map((t) => html`
      <button class=${classMap({ tool: true, off: !!t.off })} style="--gap:${t.g}px" ?disabled=${!!t.off}>
        ${t.ch ? html`<span class="disc">${t.ch}</span>` : ICONS[t.ic!]}
        <span class="l1">${t.n}</span>
        <span class="l2">${t.l2 ?? nothing}${t.drop ? html`<span class="caret sm"></span>` : nothing}</span>
      </button>`)}</div>`;
  }

  private nav() {
    return html`<section class="nav">
      <div class="crumb"><span>漏项清单</span><span>&gt;</span><span>暖通工程</span>
        <button class="round" aria-label="折叠">${icon(svg`<path d="M2 5l3-3 3 3M2 9l3-3 3 3" stroke="#fff" stroke-width="1.200"/>`, 10, "")}</button></div>
      <div class="nav-bar">
        <button>新建<span class="caret sm"></span></button>
        <button class="out">导入导出<span class="caret sm"></span></button>
        <button class="ar" aria-label="上移">${arrowUp(B)}</button>
        <button class="ar" aria-label="下移" disabled>${arrowUp("#d4d4d4", 180)}</button>
        <button class="round blue" aria-label="下载">${icon(svg`<path d="M5 1v6M2 4.500l3 3 3-3M2 9.200h6" stroke="#fff" stroke-width="1.200"/>`, 10, "")}</button>
      </div>
      <ul class="tree">
        <li class="row root"><span class="caret"></span>${building}<span>创新中心-生物医药创新平台项目1C楼机电...</span></li>
        ${TREE.map((n) => html`<li class=${classMap({ row: true, leaf: n.kind === "leaf", on: !!n.on })}>
          ${n.kind === "group" ? html`<span class="slot">${n.open ? html`<span class=${classMap({ caret: true, blue: n.box === "mark-a" })} style="display:block"></span>` : nothing}</span>${home}` : nothing}
          <span>${n.t}</span>${n.box ? html`<div class="mark ${n.box}"></div>` : nothing}</li>`)}
      </ul>
    </section>`;
  }

  private mainGrid() {
    const e = html`<td></td>`;
    return html`<table>${cols(COLS1)}
      <thead><tr>${HEAD1.map((h, i) => html`<th class=${i === 3 ? "cur" : ""}>${h}</th>`)}</tr></thead>
      <tbody>
        <tr class="sum"><th></th><td class="k0 l"><button class="pm" aria-label="折叠"></button></td><td></td><td class="l">空调风工程</td><td></td>
          <td class="tick"><input class="chk mid" type="checkbox" aria-label="锁定综合单价"></td>${e}${e}${e}<td class="r">12437</td>${e}${e}${e}${e}</tr>
        ${ROWS1.map((r) => {
          const p = r.kind === "main";
          return html`<tr class=${classMap({ bill: r.kind === "bill", quota: r.kind === "quota", "main-mat": p, purple: p, last: !!r.last, sel: !!r.sel })}>
            <th>${r.no ?? ""}</th>
            <td class="l ${r.kind === "bill" ? "k1" : r.kind === "quota" ? "k2" : "k3"}"><span class="in">${p ? nothing : html`<button class="pm" aria-label="折叠"></button>`}${r.code}</span></td>
            <td>${r.type}</td>
            <td class=${classMap({ l: true, name: true, edit: !!r.sel })}>${r.name}</td>
            <td class="l">${(r.feat ?? []).map((f) => html`<div>${f}</div>`)}</td>
            <td class="tick">${r.kind === "bill" ? html`<input class="chk mid" type="checkbox" aria-label="锁定综合单价">` : nothing}</td>
            <td class="l">个</td><td class="r">${r.qty}</td><td class="r">${r.price}</td><td class="r">${r.total}</td>${e}${e}${e}${e}</tr>`;
        })}
      </tbody></table>`;
  }

  private detailGrid() {
    return html`<table>${cols(COLS2)}
      <thead><tr>${HEAD2.map((h, i) => html`<th class=${i === 11 ? "cur" : i === 17 ? "est" : ""}>${h}</th>`)}</tr></thead>
      <tbody>${ROWS2.map((r, i) => html`<tr class=${classMap({ purple: i === 0, sel: i === 2 })}>
        <th>${i + 1}</th>
        ${r.map((c, j) => html`<td class=${classMap({ [ALIGN2[j]]: true, edit: i === 2 && j === 10, "blue-b": i === 1 && j === 10 })}>${c}</td>`)}
        <td class="tick"><input class="chk mid" type="checkbox" aria-label="锁定数量"></td>
        <td class="tick est"><input class="chk" type="checkbox" checked aria-label="是否"></td></tr>`)}</tbody></table>`;
  }

  private factorGrid() {
    return html`<table>${cols(COLS3)}
      <thead><tr>${["", "工料机类别", "费用", "调整后费用", "系数"].map((h) => html`<th>${h}</th>`)}</tr></thead>
      <tbody>${ROWS3.map((r, i) => html`<tr><th>${i + 1}</th>${r.map((c, j) => html`<td class=${j ? "r" : ""}>${c}</td>`)}</tr>`)}</tbody></table>`;
  }

  private status() {
    return html`<footer class="status">
      <div class="status-left"><span>浙江省通用安装工程预算定额(2018)(一般计税法)</span><span class="sep"></span></div>
      <div class="status-right">
        <button class="sq" aria-label="分栏">${icon(svg`<rect x="1" y="1" width="12" height="12" rx="1" stroke="#666"/><path d="M1 7h12" stroke=${B} stroke-width="5"/>`, 14, "")}</button>
        <span class="sep"></span>
        <button class="sq" aria-label="上下布局">${icon(svg`<rect x="1" y="1" width="12" height="7" rx="1" fill=${B}/><rect x="1" y="9.500" width="12" height="3.500" rx="1" fill=${B}/>`, 14, "")}</button>
        <button aria-label="左右布局">${icon(svg`<rect x="1" y="1" width="6" height="12" rx="1" fill="#8c8c8c"/><rect x="8" y="1" width="5" height="12" rx="1" fill="#8c8c8c"/>`, 14, "")}</button>
        <span class="pct">100%</span>
        <button aria-label="缩小">${icon(svg`<path d="M0 6h12" stroke="#444" stroke-width="2"/>`, 12, "")}</button>
        <input class="zoom" type="range" min="0" max="300" value="100" aria-label="缩放比例">
        <button aria-label="放大">${icon(svg`<path d="M0 6h12M6 0v12" stroke="#444" stroke-width="2"/>`, 12, "")}</button>
      </div>
    </footer>`;
  }

  render() {
    const chips = ["#444", "#e8dc9a", "#1ab7c9", "#1664c0", "#f2f7f7", "#f7fbfb", "#e0607a", "#ff8c00"];
    return html`<div class="desk">
      ${this.dock()}
      <div class="frame">
        <div class="app">
          ${this.top()}${this.tools()}
          <div class="body">
            ${this.nav()}
            <main class="main">
              <div class="tabs">
                ${["取费设置", "分部分项", "措施项目", "其他项目", "人材机调整", "费用汇总"].map((t, i) => html`<button class=${classMap({ tab: true, on: i === 1, wide: i === 4 })}>${t}</button>`)}
                <div class="tab-tools">
                  <button class="rows" aria-label="行高">${icon(svg`<path d="M3.500 3v9" stroke="#777" stroke-dasharray="2 1"/><path d="M.5 4l3-3.500 3 3.500zM.5 11l3 3.500 3-3.500z" fill="#777"/><rect x="9" y="1" width="5" height="13" rx="1" fill="#8c8c8c"/>`, 15, "")}</button>
                  ${[0, 180, 270, 90].map((a) => html`<button aria-label="移动" disabled>${arrowUp("#d4d4d4", a)}</button>`)}
                  <button class="mini" aria-label="列设置">${icon(svg`<path d="M1 0v16" stroke=${B} stroke-width="2"/><path d="M5.500 0v5M9.500 0v4M13.500 0v5" stroke=${B} stroke-width="1.500"/><circle cx="9.500" cy="10.500" r="3" stroke=${O} stroke-width="2.600"/><path d="M9.500 5.500v10M5 8l9 5M5 13l9-5" stroke=${O} stroke-width="2"/><circle cx="9.500" cy="10.500" r="1.500" fill="#fff"/>`, 16, "")}<span class="caret sm"></span></button>
                </div>
              </div>
              <div class="content">
                <section class="struct">
                  <div class="struct-bar"><button class="fold" aria-label="收起">${icon(svg`<path d="M5 1L1.500 5 5 9M9 1L5.500 5 9 9" stroke="#555"/>`, 10, "")}</button></div>
                  <div class="s-row s-root"><button class="box" aria-label="折叠"></button>${project}整个项目</div>
                  <ul class="s-kids"><li class="s-row on">${page}空调风工程</li><li class="s-row">${page}空调水工程</li></ul>
                </section>
                <section class="work">
                  <div class="upper">${this.mainGrid()}<div class="mark mark-c"></div></div>
                  <div class="lower">
                    <div class="subtabs">${["工料机显示", "单价构成", "标准换算", "换算信息", "安装费用", "特征及内容", "工程量明细", "说明信息"].map((t, i) => html`<button class=${classMap({ subtab: true, on: i === 0, wide: t.length === 5 })}>${t}</button>`)}</div>
                    <div class="panes">
                      <div class="pane"><div class="grid-clip">${this.detailGrid()}</div>
                        <div class="bar"><i></i><div class="thumb t-long"></div><i class="next"></i></div>
                        <div class="mark mark-d"></div></div>
                      <div class="gap"></div>
                      <div class="pane side"><div class="side-head">换算系数<button class="fold" aria-label="展开">${icon(svg`<path d="M1 1l3.500 4L1 9M5 1l3.500 4L5 9" stroke="#555"/>`, 10, "")}</button></div>
                        <div class="grid-clip">${this.factorGrid()}</div>
                        <div class="bar"><i></i><div class="thumb t-short"></div><i class="next"></i></div></div>
                    </div>
                  </div>
                </section>
              </div>
            </main>
          </div>
          ${this.status()}
        </div>
        <div class="taskbar"><span class="chip" style="--c:#2aa5e8"></span><span class="pill"></span>
          ${chips.map((c) => html`<span class="chip" style="--c:${c}"></span>`)}<span class="live"></span><span class="clock">11:32</span></div>
      </div>
    </div>`;
  }
}
